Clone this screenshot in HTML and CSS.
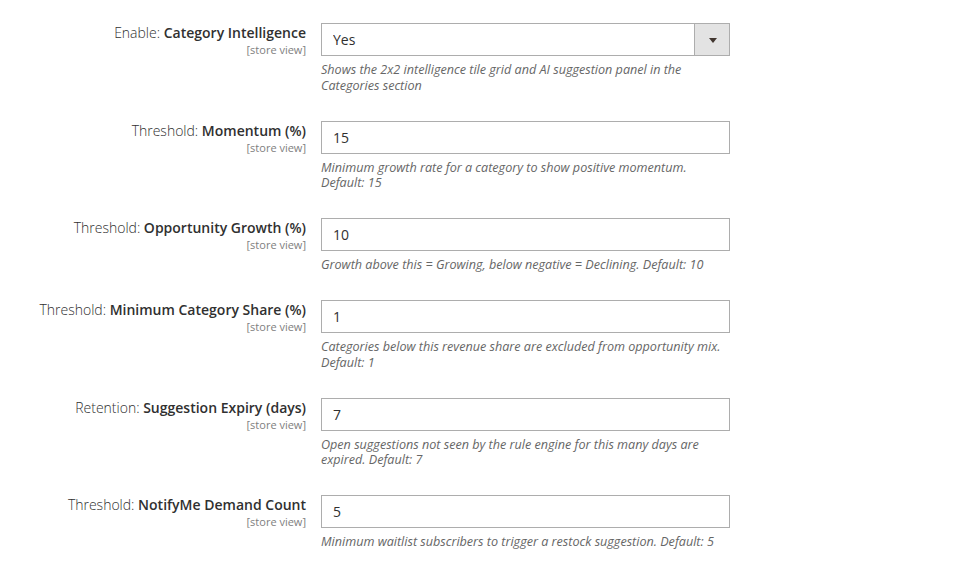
FILE: index.html
```html
<!DOCTYPE html>
<html lang="en">
<head>
    <meta charset="UTF-8">
    <meta name="viewport" content="width=device-width, initial-scale=1.0">
    <title>Category Intelligence Settings</title>
    <link rel="stylesheet" href="styles.css">
</head>
<body>
    <form class="config">
        <div class="row">
            <label class="label" for="ci-enable">
                <span class="title">Enable: <strong>Category Intelligence</strong></span>
                <span class="scope">[store view]</span>
            </label>
            <div class="value">
                <div class="select-wrap">
                    <select id="ci-enable">
                        <option selected>Yes</option>
                        <option>No</option>
                    </select>
                    <span class="select-btn"></span>
                </div>
                <p class="note">Shows the 2x2 intelligence tile grid and AI suggestion panel in the Categories section</p>
            </div>
        </div>

        <div class="row">
            <label class="label" for="ci-momentum">
                <span class="title">Threshold: <strong>Momentum (%)</strong></span>
                <span class="scope">[store view]</span>
            </label>
            <div class="value">
                <input type="text" id="ci-momentum" value="15">
                <p class="note">Minimum growth rate for a category to show positive momentum. Default: 15</p>
            </div>
        </div>

        <div class="row">
            <label class="label" for="ci-growth">
                <span class="title">Threshold: <strong>Opportunity Growth (%)</strong></span>
                <span class="scope">[store view]</span>
            </label>
            <div class="value">
                <input type="text" id="ci-growth" value="10">
                <p class="note">Growth above this = Growing, below negative = Declining. Default: 10</p>
            </div>
        </div>

        <div class="row">
            <label class="label" for="ci-share">
                <span class="title">Threshold: <strong>Minimum Category Share (%)</strong></span>
                <span class="scope">[store view]</span>
            </label>
            <div class="value">
                <input type="text" id="ci-share" value="1">
                <p class="note">Categories below this revenue share are excluded from opportunity mix. Default: 1</p>
            </div>
        </div>

        <div class="row">
            <label class="label" for="ci-expiry">
                <span class="title">Retention: <strong>Suggestion Expiry (days)</strong></span>
                <span class="scope">[store view]</span>
            </label>
            <div class="value">
                <input type="text" id="ci-expiry" value="7">
                <p class="note">Open suggestions not seen by the rule engine for this many days are expired. Default: 7</p>
            </div>
        </div>

        <div class="row">
            <label class="label" for="ci-notify">
                <span class="title">Threshold: <strong>NotifyMe Demand Count</strong></span>
                <span class="scope">[store view]</span>
            </label>
            <div class="value">
                <input type="text" id="ci-notify" value="5">
                <p class="note">Minimum waitlist subscribers to trigger a restock suggestion. Default: 5</p>
            </div>
        </div>
    </form>
</body>
</html>
```

FILE: styles.css
```css
* {
    box-sizing: border-box;
    margin: 0;
    padding: 0;
}
body {
    background: #fff;
    font-family: 'Open Sans', 'Liberation Sans', sans-serif;
    color: #303030;
}
.config {
    display: flex;
    flex-direction: column;
    gap: 27.5px;
    padding-top: 23px;
}
.row {
    display: grid;
    grid-template-columns: 307px 409px;
    column-gap: 14px;
}
.label {
    display: flex;
    flex-direction: column;
    align-items: flex-end;
    text-align: right;
    padding-right: 1px;
}
.title {
    font-size: 14px;
    line-height: 19px;
    font-weight: 300;
    color: #303030;
}
.title strong {
    font-weight: 600;
}
.scope {
    margin-top: 1px;
    font-size: 11px;
    line-height: 14px;
    color: #808080;
}
input,
select {
    display: block;
    width: 100%;
    height: 33px;
    border: 1px solid #adadad;
    border-radius: 0;
    background: #fff;
    padding: 0 11px;
    font-family: inherit;
    font-size: 14px;
    color: #303030;
    outline: none;
}
.select-wrap {
    position: relative;
}
select {
    appearance: none;
    -webkit-appearance: none;
    padding-right: 40px;
}
.select-btn {
    position: absolute;
    top: 0;
    right: 0;
    width: 36px;
    height: 33px;
    background: #e3e3e3;
    border: 1px solid #adadad;
    pointer-events: none;
}
.select-btn::after {
    content: '';
    position: absolute;
    left: 14px;
    top: 14px;
    border-left: 4px solid transparent;
    border-right: 4px solid transparent;
    border-top: 5px solid #41362f;
}
.note {
    margin-top: 6px;
    font-size: 12.6px;
    line-height: 15.5px;
    font-style: italic;
    color: #666;
}
```
